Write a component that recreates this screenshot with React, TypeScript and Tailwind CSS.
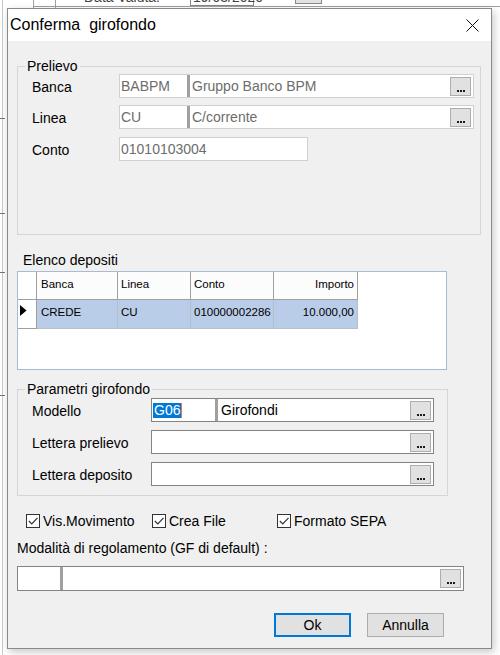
import React from "react";

function Dots() {
  return (
    <div className="w-[21px] h-[19px] bg-[#e1e1e1] border border-[#adadad] flex items-end justify-center pb-[3px] gap-[1px] shrink-0">
      <span className="w-[2px] h-[2px] bg-[#1a1a1a]" />
      <span className="w-[2px] h-[2px] bg-[#1a1a1a]" />
      <span className="w-[2px] h-[2px] bg-[#1a1a1a]" />
    </div>
  );
}

function Sep() {
  return <div className="w-[3px] self-stretch bg-[#a0a0a0] shrink-0" />;
}

function Check({ label, className }: { label: string; className?: string }) {
  return (
    <div className={"flex items-center h-[16px] " + (className || "")}>
      <div className="w-[14px] h-[14px] border border-[#333] bg-white flex items-center justify-center shrink-0">
        <svg width="12" height="12" viewBox="0 0 12 12">
          <polyline points="1.8,6 4.8,9 10.5,2.8" fill="none" stroke="#333" strokeWidth="1.2" />
        </svg>
      </div>
      <span className="ml-[3px] text-[14px] leading-[16px]">{label}</span>
    </div>
  );
}

export default function App() {
  return (
    <div className="relative w-[500px] h-[655px] bg-white overflow-hidden font-['Liberation_Sans',Arial,sans-serif] text-black">
      {/* background window fragments */}
      <div className="absolute left-0 top-0 w-[500px] h-[8px] overflow-hidden">
        <div className="absolute left-[33px] top-[6px] w-[470px] h-px bg-[#a0a0a0]" />
        <div className="absolute left-[33px] top-[0px] w-px h-[8px] bg-[#a0a0a0]" />
        <div className="absolute left-[55px] top-[0px] w-px h-[8px] bg-[#a0a0a0]" />
        <span className="absolute left-[84px] top-[-11px] text-[14px] leading-[16px] text-[#444]">Data Valuta:</span>
        <div className="absolute left-[190px] top-[-10px] w-[64px] h-[16px] border border-[#888] bg-white" />
        <span className="absolute left-[193px] top-[-11px] text-[14px] leading-[16px] text-[#444]">19/03/2020</span>
        <div className="absolute left-[295px] top-[-10px] w-[27px] h-[14px] border border-[#888] bg-[#e1e1e1]" />
      </div>
      <div className="absolute left-[2px] top-[0px] w-px h-[655px] bg-[#c8c8c8]" />
      <div className="absolute left-[0px] top-[118px] w-[5px] h-px bg-[#777]" />
      <div className="absolute left-[0px] top-[213px] w-[5px] h-px bg-[#777]" />
      <div className="absolute left-[0px] top-[272px] w-[5px] h-px bg-[#777]" />
      <div className="absolute left-[0px] top-[395px] w-[5px] h-px bg-[#777]" />

      {/* dialog window */}
      <div className="absolute left-[7px] top-[8px] w-[485px] h-[641px] border border-[#8a8a8a] bg-[#f0f0f0] flex flex-col shadow-[2px_3px_8px_rgba(0,0,0,0.22)]">
        {/* title bar */}
        <div className="h-[32px] bg-white flex items-center justify-between pl-[2px] pr-[12px] shrink-0">
          <span className="text-[16px] leading-[20px] text-black whitespace-pre">Conferma  girofondo</span>
          <svg width="13" height="13" viewBox="0 0 13 13">
            <line x1="0.5" y1="0.5" x2="12.5" y2="12.5" stroke="#111" strokeWidth="1" />
            <line x1="12.5" y1="0.5" x2="0.5" y2="12.5" stroke="#111" strokeWidth="1" />
          </svg>
        </div>

        {/* body */}
        <div className="flex-1 flex flex-col text-[14px] leading-[16px]">
          {/* Prelievo */}
          <fieldset className="ml-[9px] mt-[17px] w-[464px] h-[177px] border border-[#d5d5d5] box-border">
            <legend className="ml-[7px] px-[2px] text-[14px] leading-[16px]">Prelievo</legend>
            <div className="flex items-center pl-[14px] h-[24px]">
              <span className="w-[87px] pt-[2px]">Banca</span>
              <div className="w-[355px] h-[24px] border border-[#d0d0d0] bg-white flex items-center">
                <span className="w-[67px] pl-[1px] text-[#6d6d6d]">BABPM</span>
                <Sep />
                <span className="flex-1 pl-[2px] text-[#6d6d6d]">Gruppo Banco BPM</span>
                <div className="mr-[2px]"><Dots /></div>
              </div>
            </div>
            <div className="flex items-center pl-[14px] h-[24px] mt-[7px]">
              <span className="w-[87px] pt-[2px]">Linea</span>
              <div className="w-[355px] h-[24px] border border-[#d0d0d0] bg-white flex items-center">
                <span className="w-[67px] pl-[1px] text-[#6d6d6d]">CU</span>
                <Sep />
                <span className="flex-1 pl-[2px] text-[#6d6d6d]">C/corrente</span>
                <div className="mr-[2px]"><Dots /></div>
              </div>
            </div>
            <div className="flex items-center pl-[14px] h-[24px] mt-[8px]">
              <span className="w-[87px] pt-[2px]">Conto</span>
              <div className="w-[189px] h-[24px] border border-[#d0d0d0] bg-white flex items-center">
                <span className="pl-[1px] text-[#6d6d6d]">01010103004</span>
              </div>
            </div>
          </fieldset>

          {/* Elenco depositi */}
          <div className="ml-[15px] mt-[17px]">Elenco depositi</div>
          <div className="ml-[9px] mt-[3px] w-[430px] h-[99px] border border-[#a9bbd0] bg-white text-[11.5px] leading-[14px]">
            <div className="flex h-[28px]">
              <div className="w-[19px] border-r border-b border-[#a0a0a0] bg-white" />
              <div className="w-[81px] border-r border-b border-[#a0a0a0] bg-[#fcfcfc] pl-[4px] pt-[5px]">Banca</div>
              <div className="w-[73px] border-r border-b border-[#a0a0a0] bg-[#fcfcfc] pl-[3px] pt-[5px]">Linea</div>
              <div className="w-[83px] border-r border-b border-[#a0a0a0] bg-[#fcfcfc] pl-[3px] pt-[5px]">Conto</div>
              <div className="w-[84px] border-r border-b border-[#a0a0a0] bg-[#fcfcfc] pr-[3px] pt-[5px] text-right">Importo</div>
            </div>
            <div className="flex h-[29px]">
              <div className="w-[19px] border-r border-b border-[#a0a0a0] bg-white flex items-start pt-[5px] pl-[2px]">
                <svg width="7" height="11" viewBox="0 0 7 11">
                  <polygon points="0,0 6.5,5.5 0,11" fill="#000" />
                </svg>
              </div>
              <div className="w-[81px] border-r border-b border-[#b5bfcc] bg-[#b9cde9] pl-[4px] pt-[5px]">CREDE</div>
              <div className="w-[73px] border-r border-b border-[#b5bfcc] bg-[#b9cde9] pl-[3px] pt-[5px]">CU</div>
              <div className="w-[83px] border-r border-b border-[#b5bfcc] bg-[#b9cde9] pl-[3px] pt-[5px]">010000002286</div>
              <div className="w-[84px] border-r border-b border-[#b5bfcc] bg-[#b9cde9] pr-[3px] pt-[5px] text-right">10.000,00</div>
            </div>
          </div>

          {/* Parametri girofondo */}
          <fieldset className="ml-[9px] mt-[11px] w-[431px] h-[115px] border border-[#d5d5d5] box-border">
            <legend className="ml-[7px] px-[2px] text-[14px] leading-[16px]">Parametri girofondo</legend>
            <div className="flex items-center pl-[14px] h-[24px] mt-[1px]">
              <span className="w-[119px] pt-[2px]">Modello</span>
              <div className="w-[283px] h-[24px] border border-[#848484] bg-white flex items-center">
                <div className="w-[63px] pl-[1px] flex items-center">
                  <span className="bg-[#0078d7] text-white leading-[15px] px-[1px] border-r border-[#e07a3a]">G06</span>
                </div>
                <Sep />
                <span className="flex-1 pl-[3px]">Girofondi</span>
                <div className="mr-[2px]"><Dots /></div>
              </div>
            </div>
            <div className="flex items-center pl-[14px] h-[24px] mt-[8px]">
              <span className="w-[119px] pt-[2px]">Lettera prelievo</span>
              <div className="w-[283px] h-[24px] border border-[#848484] bg-white flex items-center justify-end">
                <div className="mr-[2px]"><Dots /></div>
              </div>
            </div>
            <div className="flex items-center pl-[14px] h-[24px] mt-[8px]">
              <span className="w-[119px] pt-[2px]">Lettera deposito</span>
              <div className="w-[283px] h-[24px] border border-[#848484] bg-white flex items-center justify-end">
                <div className="mr-[2px]"><Dots /></div>
              </div>
            </div>
          </fieldset>

          {/* checkboxes */}
          <div className="flex items-center ml-[18px] mt-[17px]">
            <Check label="Vis.Movimento" className="w-[126px]" />
            <Check label="Crea File" className="w-[125px]" />
            <Check label="Formato SEPA" />
          </div>

          <div className="ml-[9px] mt-[11px]">Modalità di regolamento (GF di default) :</div>
          <div className="ml-[9px] mt-[10px] w-[447px] h-[25px] border border-[#848484] bg-white flex items-center">
            <div className="w-[42px]" />
            <Sep />
            <div className="flex-1" />
            <div className="mr-[2px]"><Dots /></div>
          </div>

          {/* buttons */}
          <div className="flex ml-[266px] mt-[22px] gap-[16px]">
            <div className="w-[77px] h-[24px] bg-[#e1e1e1] border-2 border-[#0078d7] flex items-center justify-center">Ok</div>
            <div className="w-[77px] h-[24px] bg-[#e1e1e1] border border-[#adadad] flex items-center justify-center">Annulla</div>
          </div>
        </div>
      </div>
    </div>
  );
}
